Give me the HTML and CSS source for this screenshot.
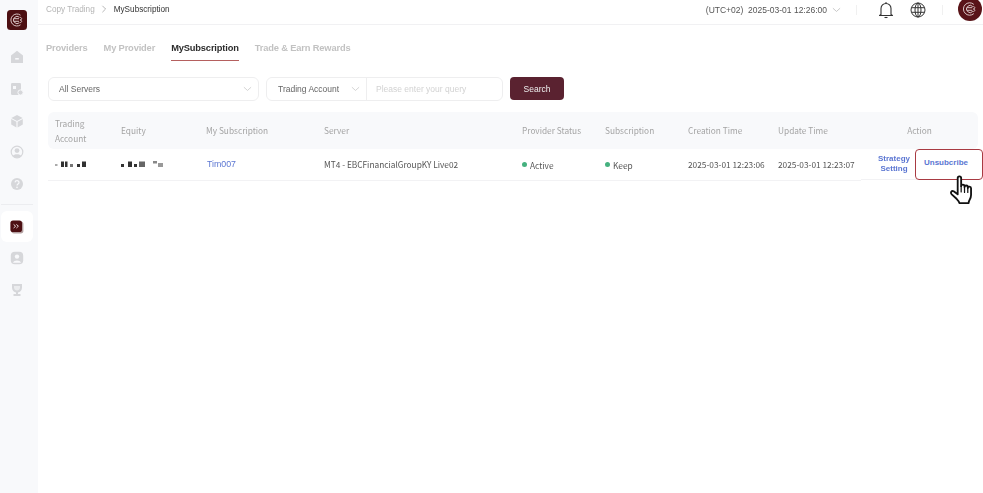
FILE: index.html
```html
<!DOCTYPE html>
<html lang="en">
<head>
<meta charset="utf-8">
<title>MySubscription</title>
<link rel="stylesheet" href="styles.css">
</head>
<body>
<div class="app">
  <aside class="sidebar">
    <svg class="logo" viewBox="0 0 20 20"><rect width="20" height="20" rx="3.5" fill="#4d1013"/><g fill="none" stroke="#d9c5c5" stroke-width="1"><path d="M13.5 5.2a6 6 0 1 0 0 9.6"/><path d="M12.5 7.3a3.6 3.6 0 1 0 0 5.4"/><path d="M6.5 8.7h5.5M6.5 11.3h5.5M13 7.4c2.2 0 2.2 2.6 0 2.6 2.2 0 2.2 2.6 0 2.6"/></g></svg>
    <nav class="nav-top">
      <svg class="nav-icon" viewBox="0 0 14 14"><path d="M7 .8 13 5.4V13H1V5.4Z" fill="#d6d7da"/><rect x="5.2" y="8" width="3.6" height="1.6" fill="#f8f9fb"/></svg>
      <svg class="nav-icon" viewBox="0 0 14 14"><rect x="1" y="1" width="10" height="12" rx="1.2" fill="#d6d7da"/><path d="M3 4h3v3H3z" fill="#f8f9fb"/><circle cx="10.5" cy="10.5" r="2.6" fill="#d6d7da" stroke="#f8f9fb"/></svg>
      <svg class="nav-icon" viewBox="0 0 14 14"><path d="M7 1 12.6 4 7 7 1.4 4Z" fill="#d6d7da"/><path d="M1.2 5 6.4 7.8V13.4L1.2 10.4ZM12.8 5 7.6 7.8V13.4L12.8 10.4Z" fill="#d6d7da"/></svg>
      <svg class="nav-icon" viewBox="0 0 14 14"><circle cx="7" cy="7" r="5.8" fill="none" stroke="#d6d7da" stroke-width="1.2"/><circle cx="7" cy="5.6" r="2.4" fill="#d6d7da"/><path d="M2.8 11c1-2.2 7.4-2.2 8.4 0-2 2.3-6.400 2.300-8.400 0Z" fill="#d6d7da"/></svg>
      <svg class="nav-icon" viewBox="0 0 14 14"><circle cx="7" cy="7" r="6" fill="#d6d7da"/><path d="M5 5.400c.3-2.400 4.200-2.200 4 .2-.1 1.400-2 1.400-2 2.900" fill="none" stroke="#f8f9fb" stroke-width="1.200"/><circle cx="7" cy="10.400" r=".8" fill="#f8f9fb"/></svg>
    </nav>
    <div class="nav-rule"></div>
    <div class="nav-active">
      <svg class="nav-badge" viewBox="0 0 14 14"><rect x="1.400" y="1.400" width="12" height="12" rx="2.600" fill="#b3a0a1"/><rect x=".4" y=".4" width="11.600" height="11.600" rx="2.600" fill="#4d1013"/><path d="M3.600 4.400 5.600 6.200 3.600 8M6.400 4.400 8.400 6.200 6.400 8" fill="none" stroke="#e8d8d8"/></svg>
    </div>
    <nav class="nav-bottom">
      <svg class="nav-icon" viewBox="0 0 14 14"><rect x=".8" y=".8" width="12.400" height="12.400" rx="4" fill="#d6d7da"/><circle cx="7" cy="5.600" r="2.200" fill="#f8f9fb"/><path d="M3 11.800c.8-3.200 7.200-3.200 8 0Z" fill="#f8f9fb"/></svg>
      <svg class="nav-icon" viewBox="0 0 14 14"><path d="M2 1h10v3.500c0 3-2 4.500-4 4.900V11h2.500v2h-7v-2H6V9.400C4 9 2 7.500 2 4.500Z" fill="#d6d7da"/><path d="M4 3h6v1.600c0 1.800-1.400 2.900-3 2.900S4 6.400 4 4.600Z" fill="#ebecee"/></svg>
    </nav>
  </aside>

  <div class="main">
    <header class="topbar">
      <div class="crumbs">
        <span class="crumb-root">Copy Trading</span>
        <svg class="crumb-sep" viewBox="0 0 6 10"><path d="M1 1l4 4-4 4" fill="none" stroke="#9a9a9a" stroke-width=".9"/></svg>
        <span class="crumb-here">MySubscription</span>
      </div>
      <div class="top-right">
        <span class="clock">(UTC+02)&nbsp; 2025-03-01 12:26:00</span>
        <svg class="clock-caret" viewBox="0 0 10 6"><path d="M1 1l4 3.600L9 1" fill="none" stroke="#b5b5b5" stroke-width=".8"/></svg>
        <span class="top-rule rule-a"></span>
        <svg class="bell" viewBox="0 0 16 18"><path d="M3 13.500V7.500a5 5 0 0 1 10 0v6l1.500 1h-13Z" fill="none" stroke="#333" stroke-width="1.100" stroke-linejoin="round"/><path d="M6.500 16.500h3" stroke="#333" stroke-width="1.100"/><path d="M8 1v1.500" stroke="#333"/></svg>
        <svg class="globe" viewBox="0 0 16 16"><g fill="none" stroke="#333" stroke-width="1"><circle cx="8" cy="8" r="7"/><ellipse cx="8" cy="8" rx="3" ry="7"/><path d="M1.500 5.700h13M1.500 10.300h13M8 1v14"/></g></svg>
        <span class="top-rule rule-b"></span>
        <svg class="avatar" viewBox="0 0 24 24"><circle cx="12" cy="12" r="12" fill="#591418"/><g fill="none" stroke="#d9c5c5" stroke-width="1"><path d="M15.800 7.400a6.200 6.200 0 1 0 0 9.200"/><path d="M14.800 9.600a3.600 3.600 0 1 0 0 4.800"/><path d="M8.800 10.700h5.500M8.800 13.300h5.500M15.300 9.500c2 0 2 2.500 0 2.500 2 0 2 2.500 0 2.500"/></g></svg>
      </div>
    </header>

    <div class="content">
      <div class="tabs">
        <span class="tab">Providers</span>
        <span class="tab">My Provider</span>
        <span class="tab tab-active">MySubscription</span>
        <span class="tab">Trade &amp; Earn Rewards</span>
      </div>

      <div class="filters">
        <div class="select server-select">
          <span>All Servers</span>
          <svg class="caret" viewBox="0 0 10 6"><path d="M1 1l4 3.600L9 1" fill="none" stroke="#c4c4c4" stroke-width=".8"/></svg>
        </div>
        <div class="query">
          <div class="query-type">
            <span>Trading Account</span>
            <svg class="caret" viewBox="0 0 10 6"><path d="M1 1l4 3.600L9 1" fill="none" stroke="#c4c4c4" stroke-width=".8"/></svg>
          </div>
          <span class="query-input">Please enter your query</span>
        </div>
        <button class="search" type="button">Search</button>
      </div>

      <table class="grid">
        <colgroup>
          <col class="c1"><col class="c2"><col class="c3"><col class="c4"><col class="c5"><col class="c6"><col class="c7"><col class="c8"><col class="c9">
        </colgroup>
        <thead>
          <tr>
            <th>Trading<br>Account</th>
            <th>Equity</th>
            <th>My Subscription</th>
            <th>Server</th>
            <th>Provider Status</th>
            <th>Subscription</th>
            <th>Creation Time</th>
            <th>Update Time</th>
            <th class="th-action">Action</th>
          </tr>
        </thead>
        <tbody>
          <tr>
            <td>
              <svg class="mask mask-a" viewBox="0 0 32 8"><g fill="#333" filter="url(#soft)"><rect x="0" y="4" width="2.500" height="2" fill="#aaa"/><rect x="6" y="1.500" width="3" height="5.500"/><rect x="10" y="1.500" width="2.500" height="5.500"/><rect x="15" y="4" width="3" height="3" fill="#777"/><rect x="22" y="4" width="3" height="3"/><rect x="27" y="1.500" width="4" height="5.500"/></g></svg>
            </td>
            <td>
              <svg class="mask mask-b" viewBox="0 0 44 8"><g fill="#333" filter="url(#soft)"><rect x="0" y="4" width="3" height="3"/><rect x="7" y="1.500" width="4" height="5.500"/><rect x="13" y="4" width="3" height="3"/><rect x="18" y="1.500" width="6" height="5.500" fill="#666"/><rect x="32" y="1" width="4" height="2.500" fill="#888"/><rect x="37" y="3" width="5" height="4" fill="#999"/></g></svg>
            </td>
            <td class="link sub-name">Tim007</td>
            <td>MT4 - EBCFinancialGroupKY Live02</td>
            <td><span class="dot"></span><span class="status">Active</span></td>
            <td><span class="dot"></span><span class="status">Keep</span></td>
            <td>2025-03-01 12:23:06</td>
            <td>2025-03-01 12:23:07</td>
            <td class="actions">
              <span class="link strategy">Strategy<br>Setting</span>
              <span class="link unsub">Unsubcribe</span>
            </td>
          </tr>
        </tbody>
      </table>
    </div>
  </div>
</div>

<svg class="hand" viewBox="0 0 26 32">
  <path d="M8 3.200c0-2.400 3.600-2.400 3.600 0v8.300c0-2.200 3.500-2.200 3.500 0v.9c0-2.100 3.400-2.100 3.400 0v1c0-2 3.400-1.800 3.400.2v7c0 2.600-.7 3.900-1.700 5.500-.6 1-.8 2-.8 3H9.800c-.2-1.800-1.400-2.900-3-4.500L1.800 20c-1.700-2-.2-4.200 2-3.200L8 20Z" fill="#fff" stroke="#111" stroke-width="1.900" stroke-linejoin="round"/>
  <path d="M11.600 11.500v6M15.100 12.400v5.600M18.500 13.400v4.600" fill="none" stroke="#111" stroke-width="1.300" stroke-linecap="round"/>
</svg>

<svg class="defs" width="0" height="0"><defs><filter id="soft" x="-10%" y="-30%" width="120%" height="160%"><feGaussianBlur stdDeviation=".55"/></filter></defs></svg>
</body>
</html>
```

FILE: styles.css
```css
* { box-sizing: border-box; }
html, body { margin: 0; height: 100%; overflow: hidden; }
body {
  background: #fff;
  font-family: "Liberation Sans", Arial, sans-serif;
  color: #333;
  position: relative;
}
.app { display: flex; height: 493px; width: 983px; filter: blur(.35px); }
svg { display: block; flex: none; }

/* sidebar */
.sidebar {
  width: 38px;
  flex: none;
  background: #f8f9fb;
  padding-top: 10px;
  display: flex;
  flex-direction: column;
  align-items: center;
}
.logo { width: 20px; height: 20px; margin-left: -4px; }
.nav-top { display: flex; flex-direction: column; gap: 17.800px; margin-top: 20px; margin-left: -4px; }
.nav-icon { width: 14px; height: 14px; }
.nav-rule { width: 32px; height: 1px; background: #ecedf0; margin: 13px 0 0 -4px; }
.nav-active {
  width: 32px;
  height: 31px;
  margin: 6px 0 0 -4px;
  background: #fff;
  border-radius: 6px;
  display: flex;
  align-items: center;
  justify-content: center;
}
.nav-badge { width: 14px; height: 14px; }
.nav-bottom { display: flex; flex-direction: column; gap: 18px; margin-top: 9px; margin-left: -4px; }

/* top bar */
.main { flex: 1; min-width: 0; display: flex; flex-direction: column; }
.topbar {
  height: 25px;
  flex: none;
  border-bottom: 1px solid #f1f1f3;
  display: flex;
  align-items: flex-start;
  justify-content: space-between;
  padding: 0 1px 0 8px;
}
.crumbs { display: flex; align-items: center; height: 18px; font-size: 8.200px; }
.crumb-root { color: #b5b5b5; }
.crumb-sep { width: 6px; height: 8px; margin: 0 7px 0 6px; }
.crumb-here { color: #333; }
.top-right { display: flex; align-items: center; height: 20px; }
.clock { font-size: 8.500px; color: #555; }
.clock-caret { width: 9px; height: 6px; margin-left: 5px; }
.top-rule { width: 1px; height: 10px; background: #f0f0f0; }
.rule-a { margin-left: 15px; }
.bell { width: 16px; height: 18px; margin-left: 21px; }
.globe { width: 16px; height: 16px; margin-left: 16px; }
.rule-b { margin-left: 16px; }
.avatar { width: 24px; height: 24px; margin: -3px 0 0 15px; }

/* content */
.content { padding: 0 5px 0 10px; flex: 1; }
.tabs { display: flex; height: 36px; padding-top: 16px; margin-left: -2px; }
.tab {
  font-size: 9.300px;
  font-weight: 700;
  color: #c2c2c2;
  margin-right: 16px;
  height: 20px;
  line-height: 14px;
  letter-spacing: -.15px;
}
.tab-active { color: #2c2c2c; border-bottom: 1.500px solid #b5605f; }

.filters { display: flex; align-items: center; margin-top: 16px; }
.select, .query {
  height: 23.500px;
  border: 1px solid #eeeeef;
  border-radius: 6px;
  display: flex;
  align-items: center;
  font-size: 8.500px;
  color: #666;
}
.server-select { width: 211px; padding: 0 6px 0 10px; justify-content: space-between; }
.caret { width: 9px; height: 6px; }
.query { width: 237px; margin-left: 7px; }
.query-type {
  width: 100px;
  height: 100%;
  padding: 0 6px 0 11px;
  display: flex;
  align-items: center;
  justify-content: space-between;
  border-right: 1px solid #eeeeef;
}
.query-input { padding-left: 9px; color: #d2d2d2; }
.search {
  width: 54px;
  height: 23px;
  margin-left: 7px;
  border: 0;
  border-radius: 4px;
  background: #5a2230;
  color: #eee;
  font: 8.500px "Liberation Sans", Arial, sans-serif;
  padding: 0;
}

/* table */
.grid {
  border-collapse: collapse;
  table-layout: fixed;
  width: 930px;
  margin-top: 11.500px;
  font-family: "Noto Sans CJK SC", "Noto Sans", sans-serif;
  font-size: 8.300px;
}
.c1 { width: 66px; } .c2 { width: 85px; } .c3 { width: 118px; } .c4 { width: 198px; }
.c5 { width: 83px; } .c6 { width: 83px; } .c7 { width: 90px; } .c8 { width: 90px; } .c9 { width: 117px; }
th {
  height: 37px;
  background: #f8f9fb;
  font-weight: 400;
  color: #a4a4a4;
  text-align: left;
  padding: 0 0 0 7px;
  line-height: 15px;
}
th:first-child { border-radius: 6px 0 0 6px; }
th:last-child { border-radius: 0 6px 6px 0; }
.th-action { text-align: center; padding-left: 0; }
td {
  height: 31px;
  padding: 0 0 0 7px;
  color: #555;
  border-bottom: 1px solid #f2f2f4;
  white-space: nowrap;
}
.link { color: #5b76d2; }
.sub-name { font-family: "Liberation Sans", Arial, sans-serif; font-size: 8.800px; padding-left: 8px; }
.mask { height: 8px; }
.mask-a { width: 32px; }
.mask-b { width: 44px; }
.dot {
  display: inline-block;
  width: 5px;
  height: 5px;
  border-radius: 50%;
  background: #45b17f;
  margin-right: 3px;
  vertical-align: 1px;
}
.status { position: relative; top: 1px; }
.actions {
  display: flex;
  align-items: center;
  padding: 0;
  position: relative;
  height: 31px;
  font-family: "Liberation Sans", Arial, sans-serif;
  font-size: 8px;
  font-weight: 700;
}
.strategy { width: 44px; margin-left: 11px; text-align: center; line-height: 10px; }
.unsub {
  position: absolute;
  left: 54px;
  top: 0;
  width: 68px;
  height: 31px;
  border: 1.500px solid #a83a42;
  border-radius: 4px;
  background: #fff;
  display: flex;
  align-items: center;
  justify-content: center;
  padding: 0 6px 4px 0;
}

.hand { position: absolute; left: 950px; top: 175px; width: 25px; height: 31px; filter: blur(.3px); }
.defs { position: absolute; }
```
